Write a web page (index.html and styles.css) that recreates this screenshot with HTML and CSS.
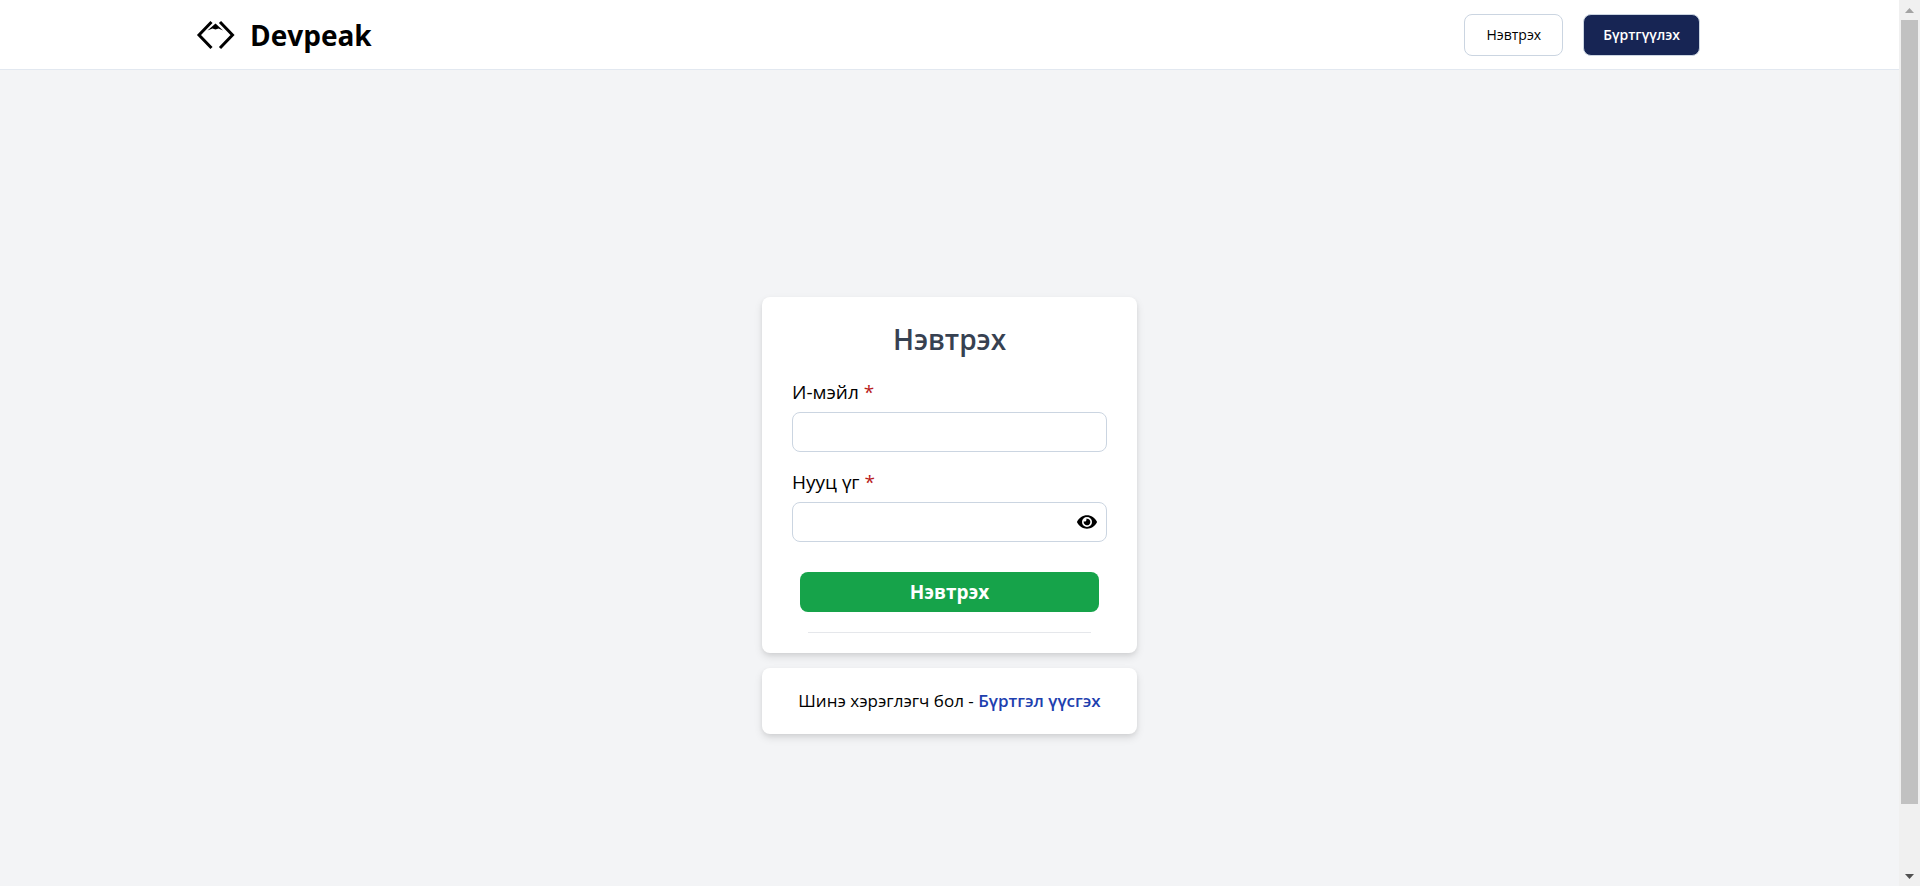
FILE: index.html
```html
<!DOCTYPE html>
<html lang="mn">
<head>
<meta charset="utf-8">
<meta name="viewport" content="width=device-width, initial-scale=1">
<title>Devpeak</title>
<link rel="stylesheet" href="styles.css">
</head>
<body>
<div class="shell">
  <div class="viewport">
    <header class="header">
      <div class="header-inner">
        <a class="brand" href="#">
          <svg class="brand-icon" viewBox="0 0 40 40" aria-hidden="true">
            <path d="M15.5 7 L3 20 L15.5 33 M24 7 L36.500 20 L24 33" fill="none" stroke="#000" stroke-width="3"/>
            <path d="M11.500 15.500 L19.500 8.500 L27 15.500 L22.500 13.500 L19.500 14.500 L16.500 13.500 Z" fill="#000"/>
          </svg>
          <span class="brand-name">Devpeak</span>
        </a>
        <nav class="actions">
          <button class="btn btn-outline" type="button">Нэвтрэх</button>
          <button class="btn btn-dark" type="button">Бүртгүүлэх</button>
        </nav>
      </div>
    </header>
    <main class="main">
      <form class="card login">
        <h1 class="title">Нэвтрэх</h1>
        <div class="field">
          <label class="label" for="email">И-мэйл <span class="required">*</span></label>
          <input class="input" id="email" type="email">
        </div>
        <div class="field">
          <label class="label" for="password">Нууц үг <span class="required">*</span></label>
          <div class="password">
            <input class="input" id="password" type="password">
            <button class="reveal" type="button" aria-label="Нууц үг харах">
              <svg class="reveal-icon" viewBox="0 0 576 512" aria-hidden="true"><path fill="currentColor" fill-rule="evenodd" d="M288 64C165 64 58 140 4 243a28 28 0 0 0 0 26C58 372 165 448 288 448s230-76 284-179a28 28 0 0 0 0-26C518 140 411 64 288 64zM288 400a144 144 0 1 1 0-288a144 144 0 0 1 0 288zM288 160a95 95 0 0 0-25 4a48 48 0 0 1-67 67a96 96 0 1 0 92-71z"/></svg>
            </button>
          </div>
        </div>
        <button class="submit" type="submit">Нэвтрэх</button>
        <hr class="divider">
      </form>
      <p class="card signup">Шинэ хэрэглэгч бол - <a class="signup-link" href="#">Бүртгэл үүсгэх</a></p>
    </main>
  </div>
  <div class="scrollbar" aria-hidden="true">
    <svg class="arrow" viewBox="0 0 21 20"><path d="M6 13 L10.500 8 L15 13 Z" fill="#a3a3a3"/></svg>
    <div class="track"><div class="thumb"></div></div>
    <svg class="arrow" viewBox="0 0 21 20"><path d="M6 8 L10.500 13 L15 8 Z" fill="#505050"/></svg>
  </div>
</div>
</body>
</html>
```
FILE: styles.css
```css
*, *::before, *::after { box-sizing: border-box; }

body {
  margin: 0;
  background: #f3f4f6;
  color: #000;
  font-family: "Segoe UI", "Open Sans", "Noto Sans", sans-serif;
}

button, input { font: inherit; }

.shell {
  display: flex;
  height: 100vh;
  overflow: hidden;
}

.viewport {
  flex: 1;
  min-width: 0;
  overflow-y: auto;
  scrollbar-width: none;
}

.header {
  background: #fff;
  border-bottom: 1px solid #e2e8f0;
}

.header-inner {
  display: flex;
  align-items: center;
  justify-content: space-between;
  max-width: 1507px;
  height: 69px;
  margin: 0 auto;
  padding-right: 3px;
}

.brand {
  display: flex;
  align-items: center;
  gap: 14px;
  color: #000;
  text-decoration: none;
}

.brand-icon { width: 40px; height: 40px; }

.brand-name {
  font-size: 28px;
  font-weight: 700;
  line-height: 40px;
}

.actions { display: flex; gap: 20px; }

.btn {
  height: 42px;
  border: 1px solid #cbd5e1;
  border-radius: 8px;
  font-size: 14px;
  cursor: pointer;
}

.btn-outline { padding: 0 21px; background: #fff; color: #000; font-weight: 500; }
.btn-dark { padding: 0 19px; background: #172554; color: #fff; font-weight: 600; }

.main {
  display: flex;
  flex-direction: column;
  align-items: center;
  justify-content: center;
  gap: 15px;
  min-height: 100vh;
  padding-top: 4px;
}

.card {
  width: 375px;
  margin: 0;
  background: #fff;
  border-radius: 8px;
  box-shadow: 0 4px 8px rgba(0, 0, 0, 0.1), 0 2px 4px rgba(0, 0, 0, 0.06);
}

.login {
  display: flex;
  flex-direction: column;
  padding: 20px 30px;
}

.title {
  margin: 0 0 16px;
  color: #374151;
  font-size: 28px;
  font-weight: 600;
  line-height: 44px;
  text-align: center;
}

.field {
  display: flex;
  flex-direction: column;
  gap: 5px;
  margin-bottom: 15px;
}

.label {
  font-size: 19px;
  font-weight: 400;
  line-height: 30px;
}

.required { color: #b91c1c; }

.input {
  display: block;
  width: 100%;
  height: 40px;
  padding: 0 12px;
  border: 1px solid #cbd5e1;
  border-radius: 8px;
  background: #fff;
}

.password { position: relative; }
.password .input { padding-right: 40px; }

.reveal {
  position: absolute;
  top: 0;
  right: 10px;
  display: flex;
  align-items: center;
  height: 40px;
  padding: 0;
  border: 0;
  background: none;
  color: #000;
}

.reveal-icon { width: 20px; height: 18px; }

.submit {
  height: 40px;
  margin: 15px 8px 20px;
  padding: 0;
  border: 0;
  border-radius: 8px;
  background: #16a34a;
  color: #fff;
  font-size: 19px;
  font-weight: 700;
  cursor: pointer;
}

.divider {
  align-self: stretch;
  margin: 0 16px;
  border: 0;
  border-top: 1px solid #e5e7eb;
}

.signup {
  padding: 18px 0;
  font-size: 17px;
  line-height: 30px;
  text-align: center;
}

.signup-link {
  color: #1e40af;
  font-weight: 600;
  text-decoration: none;
}

.scrollbar {
  display: flex;
  flex-direction: column;
  flex: none;
  width: 21px;
  background: #f0f0f0;
}

.arrow { display: block; width: 21px; height: 20px; }

.track { flex: 1; padding: 0 2px; }

.thumb { height: 92.7%; background: #c1c1c1; }
```
